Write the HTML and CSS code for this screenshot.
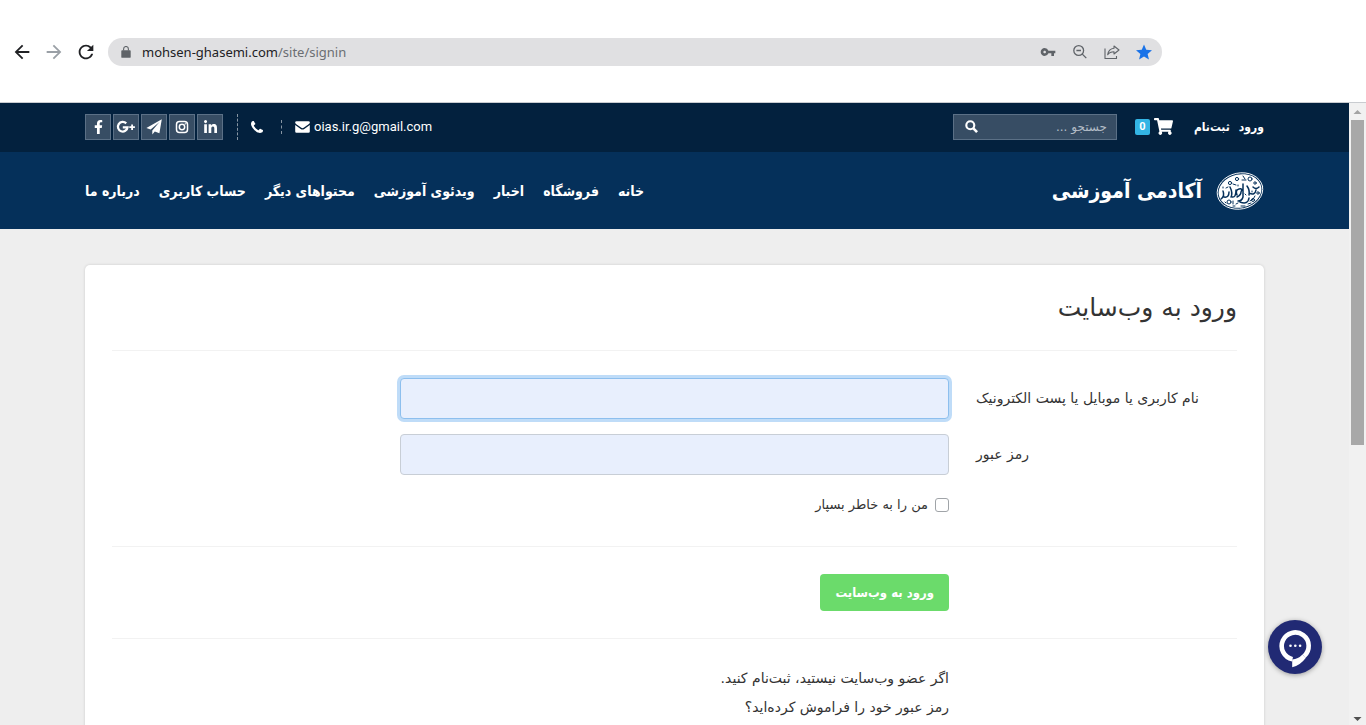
FILE: index.html
```html
<!DOCTYPE html>
<html lang="fa" dir="rtl">
<head>
    <meta charset="UTF-8">
    <meta name="viewport" content="width=device-width, initial-scale=1.0">
    <title>ورود به وب‌سایت</title>
    <link rel="stylesheet" href="styles.css">
</head>
<body>
    <div class="browser-bar" dir="ltr">
        <button class="browser-btn" type="button" aria-label="Back">
            <svg viewBox="0 0 24 24" width="22" height="22"><path d="M20 11H7.83l5.59-5.59L12 4l-8 8 8 8 1.41-1.41L7.83 13H20v-2z"/></svg>
        </button>
        <button class="browser-btn muted" type="button" aria-label="Forward">
            <svg viewBox="0 0 24 24" width="22" height="22"><path d="M12 4l-1.41 1.41L16.17 11H4v2h12.17l-5.58 5.59L12 20l8-8z"/></svg>
        </button>
        <button class="browser-btn" type="button" aria-label="Reload">
            <svg viewBox="0 0 24 24" width="22" height="22"><path d="M17.65 6.35A7.958 7.958 0 0 0 12 4c-4.42 0-7.99 3.58-7.99 8s3.57 8 7.99 8c3.73 0 6.84-2.55 7.73-6h-2.08A5.99 5.99 0 0 1 12 18c-3.31 0-6-2.69-6-6s2.69-6 6-6c1.66 0 3.14.69 4.22 1.78L13 11h7V4l-2.35 2.35z"/></svg>
        </button>
        <div class="address">
            <svg class="lock" viewBox="0 0 10 12" width="10" height="12"><path d="M1.2 4.2h7.6q.9 0 .9.9v5.8q0 .9-.9.9H1.2q-.9 0-.9-.9V5.1q0-.9.9-.9z"/><path d="M2.6 4.5V2.9a2.4 2.4 0 0 1 4.8 0v1.6" fill="none" stroke="#5f6368" stroke-width="1.1"/></svg>
            <div class="url">mohsen-ghasemi.com<span>/site/signin</span></div>
            <button type="button" aria-label="Passwords">
                <svg viewBox="0 0 24 24" width="16" height="16"><path d="M12.65 10A5.99 5.99 0 0 0 7 6c-3.31 0-6 2.69-6 6s2.69 6 6 6a5.99 5.99 0 0 0 5.65-4H17v4h4v-4h2v-4H12.65zM7 14c-1.1 0-2-.9-2-2s.9-2 2-2 2 .9 2 2-.9 2-2 2z"/></svg>
            </button>
            <button type="button" aria-label="Zoom">
                <svg viewBox="0 0 16 16" width="16" height="16" fill="none" stroke="#5f6368" stroke-width="1.3"><circle cx="6.7" cy="6.5" r="4.9"/><path d="M10.3 10.1l4 4M4.4 6.5H9"/></svg>
            </button>
            <button type="button" aria-label="Share">
                <svg viewBox="0 0 16 16" width="16" height="16" fill="none" stroke="#5f6368" stroke-width="1.1" stroke-linejoin="round"><path d="M1 4.5v10h11.5v-2.5"/><path d="M10 2l5 4-5 4V7.7c-2.8 0-4.8.8-6.3 3C4.2 7.3 6.3 4.7 10 4.3z"/></svg>
            </button>
            <button type="button" aria-label="Bookmark">
                <svg viewBox="2 2 20 19" width="16" height="16"><path fill="#1a73e8" d="M12 17.27L18.18 21l-1.64-7.03L22 9.24l-7.19-.61L12 2 9.19 8.63 2 9.24l5.46 4.73L5.82 21z"/></svg>
            </button>
        </div>
    </div>

    <div class="window" dir="ltr">
        <div class="page" dir="rtl">
            <div class="topbar">
                <div class="account">
                    <a href="#">ورود</a>
                    <a href="#">ثبت‌نام</a>
                </div>
                <a class="cart" href="#" aria-label="سبد خرید">
                    <svg viewBox="0 0 576 512" width="19" height="17"><path d="M528.12 301.319l47.273-208C578.806 78.301 567.391 64 551.99 64H159.208l-9.166-44.81C147.758 8.021 137.93 0 126.529 0H24C10.745 0 0 10.745 0 24v16c0 13.255 10.745 24 24 24h69.883l70.248 343.435C147.325 417.1 136 435.222 136 456c0 30.928 25.072 56 56 56s56-25.072 56-56c0-15.674-6.447-29.835-16.824-40h209.647C430.447 426.165 424 440.326 424 456c0 30.928 25.072 56 56 56s56-25.072 56-56c0-22.172-12.888-41.332-31.579-50.405l5.517-24.276c3.413-15.018-8.002-29.319-23.403-29.319H218.117l-6.545-32h293.145c11.206 0 20.92-7.754 23.403-18.681z"/></svg>
                    <span class="count">0</span>
                </a>
                <form class="search">
                    <input type="search" placeholder="جستجو ..." aria-label="جستجو">
                    <button type="submit" aria-label="جستجو">
                        <svg viewBox="0 0 14 14" width="13" height="13" fill="none" stroke="#fff"><circle cx="5.7" cy="5.7" r="4.3" stroke-width="2.3"/><path d="M9 9l4 4" stroke-width="2.8"/></svg>
                    </button>
                </form>
                <div class="contact" dir="ltr">
                    <div class="social">
                        <a href="#" aria-label="Facebook"><svg viewBox="0 0 320 512" width="13" height="14"><path d="M279.14 288l14.22-92.66h-88.91v-60.13c0-25.35 12.42-50.06 52.24-50.06h40.42V6.26S260.43 0 225.36 0c-73.22 0-121.08 44.38-121.08 124.72v70.62H22.89V288h81.39v224h100.17V288z"/></svg></a>
                        <a href="#" aria-label="Google Plus"><svg viewBox="0 0 20 14" width="20" height="14"><path d="M10.2 3.4A4.8 4.8 0 1 0 11.5 7.3H6.8" fill="none" stroke="#fff" stroke-width="2.3"/><path d="M15.2 4.5H17v1.8h1.9V8H17v1.9h-1.8V8h-1.9V6.3h1.9z"/></svg></a>
                        <a href="#" aria-label="Telegram"><svg viewBox="0 0 16 16" width="16" height="16"><path d="M15.8.3l-2.4 14-4.6-1.9-2.5 3.2v-4l7.2-8.7-8.9 7.7L.4 8.9z"/></svg></a>
                        <a href="#" aria-label="Instagram"><svg viewBox="0 0 14 14" width="14" height="14" fill="none" stroke="#fff" stroke-width="1.5"><rect x="1.5" y="1.5" width="11" height="11" rx="3"/><circle cx="7" cy="7" r="2.7"/><circle cx="10.5" cy="3.7" r=".5" stroke-width=".8"/></svg></a>
                        <a href="#" aria-label="LinkedIn"><svg viewBox="0 0 448 448" width="13" height="13"><path d="M100.28 448H7.4V148.9h92.88zM53.79 108.1C24.09 108.1 0 83.5 0 53.8a53.79 53.79 0 0 1 107.58 0c0 29.7-24.1 54.3-53.79 54.3zM447.9 448h-92.68V302.4c0-34.7-.7-79.2-48.29-79.2-48.29 0-55.69 37.7-55.69 76.7V448h-92.78V148.9h89.08v40.8h1.3c12.4-23.5 42.69-48.3 87.88-48.3 94 0 111.28 61.9 111.28 142.3V448z"/></svg></a>
                    </div>
                    <a class="phone" href="#" aria-label="Phone">
                        <svg viewBox="192 256 1408 1408" width="12" height="12"><path d="M1600 1368q0 27-10 70.5t-21 68.5q-21 50-122 106-94 51-186 51-27 0-53-3.5t-57.5-12.5-47-14.5-55.5-20.5-49-18q-98-35-175-83-127-79-264-216t-216-264q-48-77-83-175-3-9-18-49t-20.5-55.5-14.5-47-12.5-57.5-3.5-53q0-92 51-186 56-101 106-122 25-11 68.5-21t70.5-10q14 0 21 3 18 6 53 76 11 19 30 54t35 63.5 31 53.5q3 4 17.500 25t21.500 35.500 7 28.500q0 20-28.500 50t-62 55-62 53-28.500 46q0 9 5 22.500t8.500 20.500 14 24 11.500 19q76 137 174 235t235 174q2 1 19 11.500t24 14 20.500 8.500 22.500 5q18 0 46-28.500t53-62 55-62 50-28.500q14 0 28.500 7t35.500 21.500 25 17.500q25 15 53.500 31t63.500 35 54 30q70 35 76 53 3 7 3 21z"/></svg>
                    </a>
                    <a class="email" href="mailto:oias.ir.g@gmail.com">
                        <svg viewBox="0 0 15 12" width="15" height="12"><path d="M1.5.3h12q1.3 0 1.3 1.2 0 .9-1.2 1.8L8.7 6.8q-1.2.8-2.4 0L1.4 3.3Q.2 2.4.2 1.5.2.3 1.5.3z"/><path d="M.2 4l5.5 4q1.8 1.2 3.6 0l5.5-4v6.5q0 1.3-1.3 1.3h-12Q.2 11.8.2 10.5z"/></svg>
                        oias.ir.g@gmail.com
                    </a>
                </div>
            </div>

            <div class="navbar">
                <a class="brand" href="#">
                    <svg viewBox="0 0 48 40" width="48" height="40" fill="none" stroke-linecap="round" stroke-linejoin="round">
                        <g transform="rotate(-12 24 20)">
                            <ellipse cx="24" cy="20" rx="23" ry="18" stroke="#fff" stroke-width=".9"/>
                            <ellipse cx="24" cy="20" rx="21.6" ry="16.600" fill="#fff"/>
                        </g>
                        <g stroke="#05305a" stroke-width="1.5">
                            <path d="M7 20q2 5-2 8M8 26q5 1 5-5M14 16q3 6 1 10M16 26q4 1 4-7M21 24q-2-5 2-6t2 3q0 3-4 5M27 13v13q-1 4-5 4M24 31q8 3 9-4M31 15q3 4 2 9M33 22q6 3 7-3M37 16q3 3 6 0"/>
                        </g>
                        <g stroke="#05305a" stroke-width="1">
                            <path d="M17 13l3 1M10 17l2-1M22 14v1M29 23l1 1M36 20v1M39 25q-1 4-5 5M20 33l2-1M25 35h4M32 33l3-1"/>
                            <circle cx="14" cy="12" r="1.600"/><circle cx="21" cy="8" r="1.600"/><circle cx="34" cy="8" r="2"/><circle cx="39" cy="12" r="1.200"/><circle cx="13" cy="31" r="2"/><circle cx="37" cy="29" r="1.500"/><circle cx="42" cy="22" r="1.200"/>
                            <path d="M27 5l2 3M26 9h4M9 31l1 1M17 30v3M17 35h2M7 17v-1"/>
                        </g>
                    </svg>
                    <span>آکادمی آموزشی</span>
                </a>
                <nav class="menu">
                    <a href="#">خانه</a>
                    <a href="#">فروشگاه</a>
                    <a href="#">اخبار</a>
                    <a href="#">ویدئوی آموزشی</a>
                    <a href="#">محتواهای دیگر</a>
                    <a href="#">حساب کاربری</a>
                    <a href="#">درباره ما</a>
                </nav>
            </div>

            <main class="content">
                <form class="card">
                    <h1>ورود به وب‌سایت</h1>
                    <div class="fields">
                        <div class="row">
                            <label for="username">نام کاربری یا موبایل یا پست الکترونیک</label>
                            <input class="text-input" type="text" id="username" autofocus>
                        </div>
                        <div class="row">
                            <label for="password">رمز عبور</label>
                            <input class="text-input" type="password" id="password">
                        </div>
                        <div class="row">
                            <div class="remember">
                                <input type="checkbox" id="remember">
                                <label for="remember">من را به خاطر بسپار</label>
                            </div>
                        </div>
                    </div>
                    <div class="row actions">
                        <div class="offset">
                            <button class="btn" type="submit">ورود به وب‌سایت</button>
                        </div>
                    </div>
                    <div class="row help">
                        <div class="offset">
                            <p>اگر عضو وب‌سایت نیستید، <a href="#">ثبت‌نام کنید.</a></p>
                            <p><a href="#">رمز عبور خود را فراموش کرده‌اید؟</a></p>
                        </div>
                    </div>
                </form>
            </main>
        </div>

        <div class="scrollbar">
            <svg viewBox="0 0 17 17" width="17" height="17"><path fill="#a3a3a3" d="M4.5 11l4-4 4 4z"/></svg>
            <div class="thumb"></div>
            <svg viewBox="0 0 17 17" width="17" height="17"><path fill="#505050" d="M4.5 9l4 4 4-4z"/></svg>
        </div>

        <button class="chat" type="button" aria-label="گفتگو">
            <svg viewBox="0 0 54 54" width="54" height="54">
                <path d="M24.500 39.200A13.500 13.500 0 1 1 36 36.200" fill="none" stroke="#fff" stroke-width="4.600"/>
                <path fill="#fff" d="M24.200 39.500q6-.5 10.300-5l3.200 3.500q-5.500 7.500-13.500 9.200z"/>
                <circle cx="22.500" cy="25.700" r="1.300" fill="#fff"/><circle cx="27.300" cy="25.700" r="1.300" fill="#fff"/><circle cx="32.100" cy="25.700" r="1.300" fill="#fff"/>
            </svg>
        </button>
    </div>
</body>
</html>
```
FILE: styles.css
```css
* {
    box-sizing: border-box;
}
body {
    margin: 0;
    height: 100vh;
    display: flex;
    flex-direction: column;
    overflow: hidden;
    font-family: "DejaVu Sans", sans-serif;
    font-size: 13px;
    color: #333;
    background: #fff;
}
a {
    color: inherit;
    text-decoration: none;
}
button {
    padding: 0;
    border: none;
    background: none;
    font-family: inherit;
    cursor: pointer;
}
svg {
    display: block;
    flex-shrink: 0;
}

/* browser toolbar */
.browser-bar {
    height: 103px;
    flex-shrink: 0;
    display: flex;
    align-items: center;
    gap: 10px;
    padding: 2px 204px 0 11px;
    border-bottom: 1px solid #c9ccd0;
}
.browser-btn svg {
    fill: #202124;
}
.browser-btn.muted svg {
    fill: #9aa0a6;
}
.address {
    flex: 1;
    height: 28px;
    display: flex;
    align-items: center;
    gap: 16px;
    margin-left: 1px;
    padding: 0 10px 0 13px;
    border-radius: 14px;
    background: #e0e0e2;
    fill: #5f6368;
}
.url {
    flex: 1;
    margin-left: -5px;
    font-family: "Noto Sans", "Open Sans", sans-serif;
    font-size: 13px;
    color: #202124;
}
.url span {
    color: #6b6e72;
}

/* page area */
.window {
    position: relative;
    flex: 1;
    min-height: 0;
    display: flex;
}
.page {
    flex: 1;
    overflow: hidden;
    background: #eee;
}
.scrollbar {
    width: 17px;
    display: flex;
    flex-direction: column;
    background: #f1f1f1;
}
.thumb {
    height: 325px;
    margin: 0 2px auto;
    background: #a8a8a8;
}

.topbar {
    height: 49px;
    display: flex;
    align-items: center;
    padding: 0 85px 2px;
    color: #fff;
    background: #03213e;
}
.topbar svg {
    fill: #fff;
}
.account,
.brand,
.menu,
.btn {
    font-family: "DejaVu Sans Condensed", "DejaVu Sans", sans-serif;
    font-weight: bold;
}
.account {
    display: flex;
    gap: 9px;
    font-size: 12px;
}
.cart {
    display: flex;
    align-items: center;
    gap: 4px;
    margin-right: 21px;
}
.count {
    width: 15px;
    border-radius: 2px;
    font: bold 11px/16px Roboto, sans-serif;
    text-align: center;
    background: #33b5e5;
}
.search {
    width: 164px;
    height: 26px;
    display: flex;
    align-items: center;
    margin-right: 18px;
    border: 1px solid #5b7086;
    background: #374d64;
}
.search input {
    flex: 1;
    min-width: 0;
    padding: 0 9px;
    border: none;
    outline: none;
    font: 12px "DejaVu Sans", sans-serif;
    color: #fff;
    background: none;
}
.search input::placeholder {
    color: #b4bdc7;
}
.search button {
    padding: 0 11px;
}
.search svg {
    fill: none;
}
.contact {
    display: flex;
    align-items: center;
    margin-right: auto;
}
.social {
    display: flex;
    gap: 2px;
    padding-right: 14px;
    border-right: 1px dashed #8795a3;
}
.social a {
    width: 26px;
    height: 26px;
    display: flex;
    align-items: center;
    justify-content: center;
    border: 1px solid #5b7086;
    background: #374d64;
}
.social a:nth-child(4) svg {
    fill: none;
}
.phone {
    padding: 1px 18px 1px 13px;
    border-right: 1px dashed #8795a3;
}
.email {
    display: flex;
    align-items: center;
    gap: 4px;
    padding-left: 13px;
    font-family: Roboto, sans-serif;
    font-size: 13px;
}

.navbar {
    height: 77px;
    display: flex;
    align-items: center;
    justify-content: space-between;
    padding: 0 85px;
    color: #fff;
    background: #05305a;
}
.brand {
    display: flex;
    align-items: center;
    gap: 14px;
    font-size: 21px;
}
.menu {
    display: flex;
    gap: 19px;
    font-size: 14px;
}

.content {
    padding: 36px 85px;
}
.card {
    padding: 0 27px 27px;
    border-radius: 5px;
    background: #fff;
    box-shadow: 0 0 3px rgba(0, 0, 0, 0.15);
}
h1 {
    margin: 0;
    font-size: 25px;
    font-weight: normal;
    line-height: 85px;
}
.fields,
.actions,
.help {
    border-top: 1px solid #f2f2f2;
    padding: 27px 0;
}
.fields {
    display: flex;
    flex-direction: column;
    gap: 15px;
}
.row {
    display: grid;
    grid-template-columns: repeat(4, 1fr);
    column-gap: 27px;
    align-items: center;
}
.row > label {
    padding-bottom: 2px;
    font-size: 14px;
    text-align: left;
    white-space: nowrap;
}
.text-input {
    grid-column: span 2;
    height: 41px;
    padding: 0 12px;
    border: 1px solid #c8ced6;
    border-radius: 4px;
    outline: none;
    background: #e8effd;
}
.text-input:focus {
    border-color: #8dbfee;
    box-shadow: 0 0 0 3px #bfdcf8;
}
.remember,
.offset {
    grid-column: 2 / span 2;
}
.remember {
    display: flex;
    align-items: center;
    gap: 7px;
    height: 29px;
}
.remember input {
    width: 14px;
    height: 14px;
    margin: 0;
    appearance: none;
    border: 1px solid #a0a4a8;
    border-radius: 3px;
    background: #fff;
}
.remember input:checked {
    background: #6bdb6b;
}
.btn {
    display: block;
    height: 37px;
    padding: 0 15px;
    border-radius: 4px;
    font-size: 13px;
    color: #fff;
    background: #6bdb6b;
}
.help {
    padding-top: 25px;
}
.help p {
    margin: 0;
    font-size: 14px;
    line-height: 29px;
}

/* floating chat button */
.chat {
    position: absolute;
    right: 44px;
    bottom: 51px;
    border-radius: 50%;
    background: #212a74;
    box-shadow: 0 1px 5px rgba(0, 0, 0, 0.35);
}
```
